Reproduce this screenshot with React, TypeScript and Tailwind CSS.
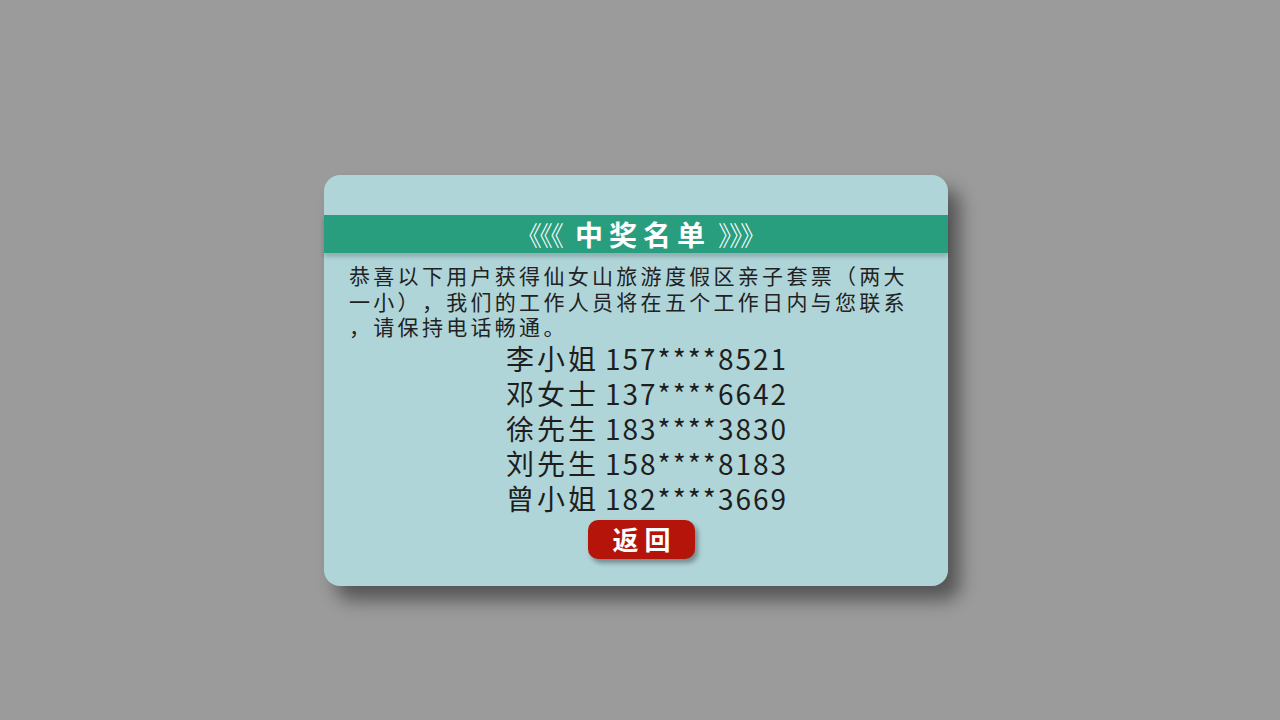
import React from "react";

const names = [
  ["李小姐", "157****8521"],
  ["邓女士", "137****6642"],
  ["徐先生", "183****3830"],
  ["刘先生", "158****8183"],
  ["曾小姐", "182****3669"],
];

export default function App() {
  return (
    <div
      className="w-[1280px] h-[720px] bg-[#9b9b9b] flex items-start justify-center pt-[175px] [text-spacing-trim:space-all]"
      style={{ fontFamily: '"Noto Sans CJK SC", "Noto Sans", sans-serif' }}
    >
      <div className="ml-[-8px] w-[624px] h-[411px] rounded-[16px] bg-[#b0d5d9] shadow-[12px_14px_18px_rgba(0,0,0,0.45)] flex flex-col pt-[40px]">
        <div className="h-[38px] bg-[#289e7e] shadow-[0_4px_4px_rgba(0,0,0,0.18)] flex items-center justify-start pl-[191px] text-white whitespace-nowrap">
          <span className="w-[33px] text-[27px] leading-none font-light tracking-[-16px]">《《《</span>
          <span className="ml-[27px] text-[28px] leading-none font-bold tracking-[6px]">中奖名单</span>
          <span className="ml-[7px] w-[33px] text-[27px] leading-none font-light tracking-[-16px]">》》》</span>
        </div>
        <div className="mt-[10px] px-[25px] text-[21px] leading-[25.5px] tracking-[3.3px] text-[#222] whitespace-nowrap">
          <div>恭喜以下用户获得仙女山旅游度假区亲子套票（两大</div>
          <div>一小），我们的工作人员将在五个工作日内与您联系</div>
          <div>，请保持电话畅通。</div>
        </div>
        <div className="mt-[1px] flex flex-col items-center pl-[22px] text-[28px] leading-[35px] text-[#1e1e1e]">
          {names.map(([n, p]) => (
            <div key={n} className="whitespace-nowrap">
              <span className="tracking-[3px]">{n}</span>
              <span className="ml-[6px] tracking-[2px]">{p}</span>
            </div>
          ))}
        </div>
        <div className="mt-[4px] flex justify-center pl-[11px]">
          <div className="w-[107px] h-[39px] rounded-[10px] bg-[#b5140a] shadow-[3px_4px_5px_rgba(0,0,0,0.35)] flex items-center justify-center text-white text-[26px] font-bold tracking-[6px] pl-[6px] leading-none">
            返回
          </div>
        </div>
      </div>
    </div>
  );
}
